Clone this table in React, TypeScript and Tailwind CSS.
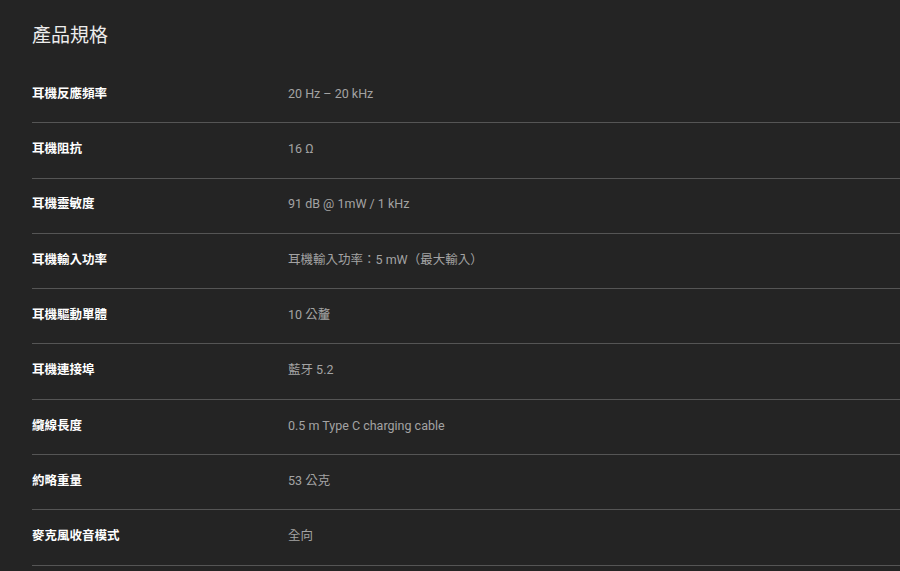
const specs = [
  { label: "耳機反應頻率", value: "20 Hz – 20 kHz" },
  { label: "耳機阻抗", value: "16 Ω" },
  { label: "耳機靈敏度", value: "91 dB @ 1mW / 1 kHz" },
  { label: "耳機輸入功率", value: "耳機輸入功率：5 mW（最大輸入）" },
  { label: "耳機驅動單體", value: "10 公釐" },
  { label: "耳機連接埠", value: "藍牙 5.2" },
  { label: "纜線長度", value: "0.5 m Type C charging cable" },
  { label: "約略重量", value: "53 公克" },
  { label: "麥克風收音模式", value: "全向" },
];

export default function App() {
  return (
    <div
      className="min-h-screen bg-[#242424] pl-8"
      style={{ fontFamily: 'Roboto, "Noto Sans CJK TC", sans-serif' }}
    >
      {/* Title */}
      <h2 className="h-[68px] pt-[23px] text-[19px] leading-[26px] text-[#ececec]">產品規格</h2>

      {/* Spec rows */}
      <div className="flex flex-col">
        {specs.map((s) => (
          <div
            key={s.label}
            className="flex h-[55.3px] items-center border-b border-[#555555] pb-[2px]"
          >
            <div className="w-[256px] shrink-0 text-[12.5px] font-bold text-white">{s.label}</div>
            <div className="text-[12.5px] text-[#a3a3a3]">{s.value}</div>
          </div>
        ))}
      </div>
    </div>
  );
}
